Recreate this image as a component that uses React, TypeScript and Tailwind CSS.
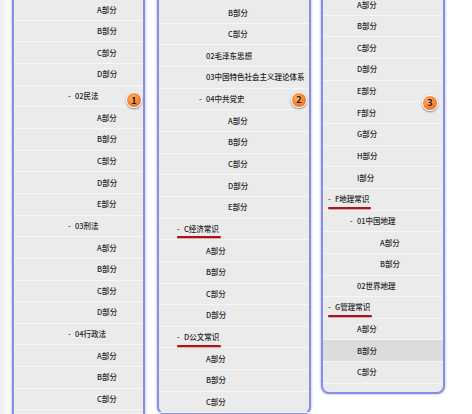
type Row = {
  label: string;
  pad: string;
  dash?: boolean;
  mark?: boolean;
  active?: boolean;
  badge?: string;
};

// left padding classes per panel, measured from the screenshot
const P1 = { l2d: "pl-[54px]", l3: "pl-[83px]" };
const P2 = { l1d: "pl-[18px]", l2: "pl-[47px]", l2d: "pl-[40px]", l3: "pl-[69px]" };
const P3 = { l1d: "pl-[5.5px]", l2: "pl-[34.5px]", l2d: "pl-[27.5px]", l3: "pl-[57.5px]" };

const parts = (letters: string, pad: string): Row[] =>
  letters.split("").map((c) => ({ label: `${c}部分`, pad }));

const panel1: Row[] = [
  ...parts("ABCD", P1.l3),
  { label: "02民法", pad: P1.l2d, dash: true, badge: "1" },
  ...parts("ABCDE", P1.l3),
  { label: "03刑法", pad: P1.l2d, dash: true },
  ...parts("ABCD", P1.l3),
  { label: "04行政法", pad: P1.l2d, dash: true },
  ...parts("ABC", P1.l3),
];

const panel2: Row[] = [
  ...parts("BC", P2.l3),
  { label: "02毛泽东思想", pad: P2.l2 },
  { label: "03中国特色社会主义理论体系", pad: P2.l2 },
  { label: "04中共党史", pad: P2.l2d, dash: true, badge: "2" },
  ...parts("ABCDE", P2.l3),
  { label: "C经济常识", pad: P2.l1d, dash: true, mark: true },
  ...parts("ABCD", P2.l2),
  { label: "D公文常识", pad: P2.l1d, dash: true, mark: true },
  ...parts("ABC", P2.l2),
];

const panel3: Row[] = [
  ...parts("ABCD", P3.l2),
  { label: "E部分", pad: P3.l2, badge: "3" },
  ...parts("FGHI", P3.l2),
  { label: "F地理常识", pad: P3.l1d, dash: true, mark: true },
  { label: "01中国地理", pad: P3.l2d, dash: true },
  ...parts("AB", P3.l3),
  { label: "02世界地理", pad: P3.l2 },
  { label: "G管理常识", pad: P3.l1d, dash: true, mark: true },
  { label: "A部分", pad: P3.l2 },
  { label: "B部分", pad: P3.l2, active: true },
  { label: "C部分", pad: P3.l2 },
];

const BADGE_POS: Record<string, string> = {
  "1": "right-[1px] top-[6.5px]",
  "2": "right-[2px] top-[3.2px]",
  "3": "right-[4.5px] top-[14.2px]",
};

function Badge({ n }: { n: string }) {
  return (
    <span
      className={`absolute z-10 ${BADGE_POS[n]} flex h-[16px] w-[16px] items-center justify-center rounded-full border-[1.5px] border-white bg-[radial-gradient(circle_at_40%_35%,#fbb06a,#ee7424_70%,#d95e12)] text-[9px] font-bold leading-none text-[#2a1608] shadow-[0_1px_2px_rgba(0,0,0,0.45)]`}
    >
      {n}
    </span>
  );
}

function TreeRow({ row }: { row: Row }) {
  return (
    <div
      className={`relative flex h-[21.65px] items-center border-b border-[#f6f6f6] ${row.pad} ${
        row.active ? "bg-[#dcdcdc]" : ""
      }`}
    >
      <span className="relative whitespace-nowrap text-[7.5px] font-medium leading-[10px] text-[#262626]">
        {row.dash && <span className="inline-block w-[7px]">-</span>}
        {row.label}
        {row.mark && (
          <span className="absolute left-0 right-[-2px] top-[12.5px] h-[2px] rounded-full bg-[#b3121c] shadow-[0_1px_1px_rgba(120,0,0,0.3)]" />
        )}
      </span>
      {row.badge && <Badge n={row.badge} />}
    </div>
  );
}

function Panel({ rows, className }: { rows: Row[]; className: string }) {
  return (
    <div
      className={`relative shrink-0 rounded-b-[8px] border-2 border-[#8a8ee2] bg-[#ebebeb] shadow-[0_0_2px_1px_rgba(130,130,220,0.35)] ${className}`}
    >
      {rows.map((r, i) => (
        <TreeRow key={i} row={r} />
      ))}
    </div>
  );
}

export default function App() {
  return (
    <div
      className="flex h-[414px] w-[472px] items-start overflow-hidden bg-[linear-gradient(to_right,#ededed,#ffffff_12px)] pl-[12px]"
      style={{ fontFamily: '"Noto Sans CJK SC", "Noto Sans", sans-serif' }}
    >
      <Panel rows={panel1} className="mt-[-2.8px] w-[133px] pb-[24px]" />
      <Panel rows={panel2} className="ml-[12px] mt-[-21.45px] w-[154px] pt-[21.65px]" />
      <Panel rows={panel3} className="ml-[9.5px] mt-[-7.8px] w-[124px] pb-[8px]" />
    </div>
  );
}
